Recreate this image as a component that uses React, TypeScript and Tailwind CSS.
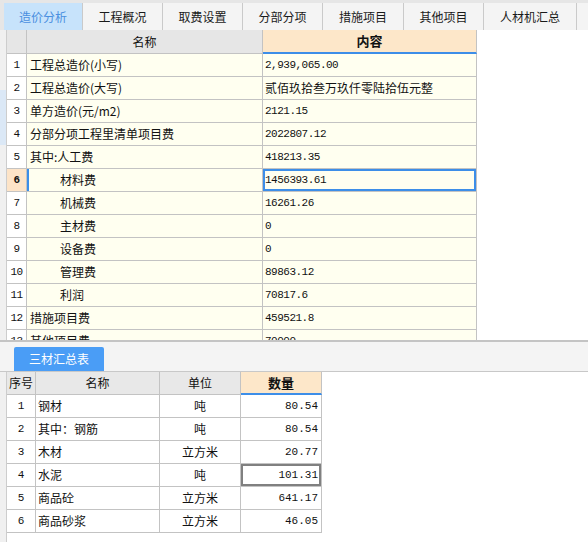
import React from 'react';

// 顶部页签
const TABS: { label: string; width: string }[] = [
  { label: '造价分析', width: 'w-[79px]' },
  { label: '工程概况', width: 'w-[80px]' },
  { label: '取费设置', width: 'w-[80px]' },
  { label: '分部分项', width: 'w-[80px]' },
  { label: '措施项目', width: 'w-[81px]' },
  { label: '其他项目', width: 'w-[80px]' },
  { label: '人材机汇总', width: 'w-[93px]' },
];

interface CostRow {
  name: string;
  value: string;
  indent?: boolean;
}

const COST_ROWS: CostRow[] = [
  { name: '工程总造价(小写)', value: '2,939,065.00' },
  { name: '工程总造价(大写)', value: '贰佰玖拾叁万玖仟零陆拾伍元整' },
  { name: '单方造价(元/m2)', value: '2121.15' },
  { name: '分部分项工程里清单项目费', value: '2022807.12' },
  { name: '其中:人工费', value: '418213.35' },
  { name: '材料费', value: '1456393.61', indent: true },
  { name: '机械费', value: '16261.26', indent: true },
  { name: '主材费', value: '0', indent: true },
  { name: '设备费', value: '0', indent: true },
  { name: '管理费', value: '89863.12', indent: true },
  { name: '利润', value: '70817.6', indent: true },
  { name: '措施项目费', value: '459521.8' },
  { name: '其他项目费', value: '70000' },
];

const MATERIALS = [
  { name: '钢材', unit: '吨', qty: '80.54' },
  { name: '其中：钢筋', unit: '吨', qty: '80.54' },
  { name: '木材', unit: '立方米', qty: '20.77' },
  { name: '水泥', unit: '吨', qty: '101.31' },
  { name: '商品砼', unit: '立方米', qty: '641.17' },
  { name: '商品砂浆', unit: '立方米', qty: '46.05' },
];

const cjk = "font-['Noto_Sans_CJK_SC',sans-serif]";
const mono = "font-['Liberation_Mono','Noto_Sans_CJK_SC',monospace]";
const line = 'border-[#c3c3c3]';

// 数字用等宽字体，中文走黑体
const isNumeric = (s: string) => /^[\d.,]+$/.test(s);

export default function App() {
  return (
    <div className={`w-[588px] h-[542px] bg-white overflow-hidden text-[12px] text-[#111] ${cjk}`}>
      {/* 页签栏 */}
      <div className="flex h-[30px] bg-[#e6e6e6] pt-[3px] pl-[4px]">
        {TABS.map((t, i) => (
          <div
            key={t.label}
            className={`${t.width} shrink-0 h-[27px] flex items-center justify-center border-r border-[#cacaca] ${
              i === 0 ? 'bg-[#c7e3fb] text-[#4a8fe0]' : 'bg-[#f4f4f4] text-[#1a1a1a]'
            }`}
          >
            {t.label}
          </div>
        ))}
        <div className="flex-1 h-[27px] bg-[#f4f4f4]" />
      </div>

      {/* 造价分析表 */}
      <div className="flex h-[312px] overflow-hidden border-b-2 border-[#c4c4c4]">
        <div className="w-[7px] shrink-0 flex flex-col bg-[#f0f0f0] border-r border-[#cdcdcd]">
          <div className="h-[60px]" />
          <div className="h-[55px] bg-[#dbe8f6]" />
        </div>
        <div className="w-[470px] shrink-0 flex flex-col">
          <div className="flex h-[24px] shrink-0">
            <div className={`w-[20px] bg-[#e6e6e6] border-r border-b ${line}`} />
            <div className={`w-[236px] bg-[#e6e6e6] border-r border-b ${line} flex items-center justify-center`}>
              名称
            </div>
            <div className="w-[214px] bg-[#fde7c9] border-r border-[#c3c3c3] border-b-2 border-b-[#3d8ee8] flex items-center justify-center font-bold text-[13px]">
              内容
            </div>
          </div>
          {COST_ROWS.map((r, i) => {
            const selected = i === 5;
            return (
              <div key={i} className="flex h-[23px] shrink-0">
                <div
                  className={`w-[20px] border-r border-b ${line} flex items-center justify-center ${mono} text-[11px] tracking-[-0.5px] ${
                    selected ? 'bg-[#fde4c8] font-bold' : 'bg-white'
                  }`}
                >
                  {i + 1}
                </div>
                <div
                  className={`w-[236px] bg-[#fffff0] border-r border-b ${line} flex items-center ${
                    r.indent ? 'pl-[33px]' : 'pl-[3px]'
                  } ${selected ? 'shadow-[inset_2px_0_0_#3d8ee8]' : ''}`}
                >
                  {r.name}
                </div>
                <div
                  className={`w-[214px] bg-[#fffff0] border-r border-b ${line} flex items-center pl-[2px] ${
                    selected ? 'shadow-[inset_0_0_0_2px_#3d8ee8]' : ''
                  }`}
                >
                  {isNumeric(r.value) ? (
                    <span className={`${mono} text-[11px] tracking-[-0.5px]`}>{r.value}</span>
                  ) : (
                    r.value
                  )}
                </div>
              </div>
            );
          })}
        </div>
        <div className="flex-1 bg-white" />
      </div>

      {/* 三材汇总表 */}
      <div className="h-[30px] bg-[#f4f4f4] border-b border-[#c8c8c8] pl-[14px] pt-[5px]">
        <div className="w-[90px] h-[24px] rounded-t-[2px] bg-[#4a9df6] text-white flex items-center justify-center">
          三材汇总表
        </div>
      </div>

      <div className="flex h-[170px]">
        <div className="w-[7px] shrink-0 bg-[#f0f0f0] border-r border-[#cdcdcd]" />
        <div className="w-[315px] shrink-0 flex flex-col">
          <div className="flex h-[23px] shrink-0">
            <div className={`w-[29px] bg-[#e8e8e8] border-r border-b ${line} flex items-center justify-center`}>序号</div>
            <div className={`w-[124px] bg-[#e8e8e8] border-r border-b ${line} flex items-center justify-center`}>名称</div>
            <div className={`w-[81px] bg-[#e8e8e8] border-r border-b ${line} flex items-center justify-center`}>单位</div>
            <div className="w-[81px] bg-[#fde7c9] border-r border-[#c3c3c3] border-b-2 border-b-[#3d8ee8] flex items-center justify-center font-bold text-[13px]">
              数量
            </div>
          </div>
          {MATERIALS.map((m, i) => (
            <div key={i} className="flex h-[23px] shrink-0">
              <div className={`w-[29px] border-r border-b ${line} flex items-center justify-center ${mono} text-[11px]`}>
                {i + 1}
              </div>
              <div className={`w-[124px] border-r border-b ${line} flex items-center pl-[2px]`}>{m.name}</div>
              <div className={`w-[81px] border-r border-b ${line} flex items-center justify-center`}>{m.unit}</div>
              <div
                className={`w-[81px] border-r border-b ${line} flex items-center justify-end pr-[3px] ${mono} text-[11px] ${
                  i === 3 ? 'shadow-[inset_0_0_0_2px_#808080]' : ''
                }`}
              >
                {m.qty}
              </div>
            </div>
          ))}
        </div>
        <div className="flex-1 bg-white" />
      </div>
    </div>
  );
}
